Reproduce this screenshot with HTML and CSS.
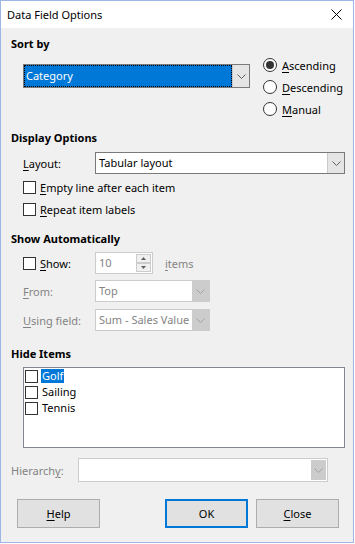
FILE: index.html
```html
<!DOCTYPE html>
<html lang="en">
<head>
    <meta charset="UTF-8">
    <title>Data Field Options</title>
    <link rel="stylesheet" href="styles.css">
</head>
<body>
<div class="window">
    <div class="titlebar">
        <span class="title">Data Field Options</span>
        <svg class="close" width="11" height="11" viewBox="0 0 11 11">
            <path d="M0.5 0.5 L10.5 10.5 M10.5 0.5 L0.5 10.5" stroke="#000" stroke-width="1" fill="none"/>
        </svg>
    </div>

    <div class="content">
        <div class="group-title">Sort by</div>
        <div class="sort-row">
            <div class="combo focus sort-combo">
                <span class="combo-value">Category</span>
                <span class="combo-btn"><svg width="9" height="5" viewBox="0 0 9 5"><path d="M0.5 0.5 L4.5 4.5 L8.5 0.5" stroke="#606060" fill="none"/></svg></span>
            </div>
            <div class="radios">
                <div class="radio-row"><span class="radio checked"></span><span><u>A</u>scending</span></div>
                <div class="radio-row"><span class="radio"></span><span><u>D</u>escending</span></div>
                <div class="radio-row"><span class="radio"></span><span><u>M</u>anual</span></div>
            </div>
        </div>

        <div class="group-title display-title">Display Options</div>
        <div class="field-row layout-row">
            <span class="field-label"><u>L</u>ayout:</span>
            <div class="combo layout-combo">
                <span class="combo-value">Tabular layout</span>
                <span class="combo-btn"><svg width="9" height="5" viewBox="0 0 9 5"><path d="M0.5 0.5 L4.5 4.5 L8.5 0.5" stroke="#606060" fill="none"/></svg></span>
            </div>
        </div>
        <div class="check-row first-check"><span class="checkbox"></span><span><u>E</u>mpty line after each item</span></div>
        <div class="check-row"><span class="checkbox"></span><span><u>R</u>epeat item labels</span></div>

        <div class="group-title show-title">Show Automatically</div>
        <div class="field-row show-row">
            <span class="field-label show-label"><span class="checkbox"></span><span><u>S</u>how:</span></span>
            <div class="spin">
                <span class="spin-value">10</span>
                <span class="spin-btns">
                    <span class="spin-btn"><svg width="5" height="3" viewBox="0 0 5 3"><path d="M0 3 L2.5 0 L5 3 Z" fill="#606060"/></svg></span>
                    <span class="spin-btn"><svg width="5" height="3" viewBox="0 0 5 3"><path d="M0 0 L2.5 3 L5 0 Z" fill="#606060"/></svg></span>
                </span>
            </div>
            <span class="items-label"><u>i</u>tems</span>
        </div>
        <div class="field-row from-row disabled">
            <span class="field-label"><u>F</u>rom:</span>
            <div class="combo small-combo">
                <span class="combo-value">Top</span>
                <span class="combo-btn"><svg width="9" height="5" viewBox="0 0 9 5"><path d="M0.5 0.5 L4.5 4.5 L8.5 0.5" stroke="#a0a0a0" fill="none"/></svg></span>
            </div>
        </div>
        <div class="field-row using-row disabled">
            <span class="field-label"><u>U</u>sing field:</span>
            <div class="combo small-combo">
                <span class="combo-value">Sum - Sales Value</span>
                <span class="combo-btn"><svg width="9" height="5" viewBox="0 0 9 5"><path d="M0.5 0.5 L4.5 4.5 L8.5 0.5" stroke="#a0a0a0" fill="none"/></svg></span>
            </div>
        </div>

        <div class="group-title hide-title">Hide Items</div>
        <div class="listbox">
            <div class="list-item"><span class="checkbox"></span><span class="item-text selected">Golf</span></div>
            <div class="list-item"><span class="checkbox"></span><span class="item-text">Sailing</span></div>
            <div class="list-item"><span class="checkbox"></span><span class="item-text">Tennis</span></div>
        </div>

        <div class="field-row hierarchy-row disabled">
            <span class="field-label hierarchy-label">Hierarch<u>y</u>:</span>
            <div class="combo hierarchy-combo">
                <span class="combo-value"></span>
                <span class="combo-btn"><svg width="9" height="5" viewBox="0 0 9 5"><path d="M0.5 0.5 L4.5 4.5 L8.5 0.5" stroke="#a0a0a0" fill="none"/></svg></span>
            </div>
        </div>

        <div class="buttons">
            <button class="btn"><u>H</u>elp</button>
            <span class="spacer"></span>
            <button class="btn default">OK</button>
            <button class="btn"><u>C</u>lose</button>
        </div>
    </div>
</div>
</body>
</html>
```

FILE: styles.css
```css
* {
    box-sizing: border-box;
}

body {
    margin: 0;
    background: #fff;
    font-family: "Noto Sans", "Open Sans", sans-serif;
    font-size: 11px;
    color: #000;
}

u {
    text-decoration-thickness: 1px;
    text-underline-offset: 2px;
}

.window {
    width: 354px;
    height: 543px;
    border: 1px solid #9db6e4;
    background: #f0f0f0;
    display: flex;
    flex-direction: column;
}

.titlebar {
    height: 27px;
    background: #fff;
    display: flex;
    align-items: center;
    justify-content: space-between;
    padding: 0 11px 0 6px;
}

.content {
    flex: 1;
    padding: 8px 0 0 10px;
}

.group-title {
    font-weight: bold;
    height: 16px;
    line-height: 16px;
}

/* sort by */
.sort-row {
    display: flex;
    margin-top: 2px;
    padding-left: 12px;
}

.combo {
    display: flex;
    height: 22px;
    border: 1px solid #7a7a7a;
    background: #fff;
}

.combo-value {
    flex: 1;
    padding-left: 3px;
    line-height: 20px;
    white-space: nowrap;
    overflow: hidden;
}

.combo-btn {
    width: 17px;
    background: #e5e5e5;
    border-left: 1px solid #c9c9c9;
    display: flex;
    align-items: center;
    justify-content: center;
}

.sort-combo {
    width: 227px;
    height: 24px;
    margin-top: 10px;
}

.sort-combo .combo-value {
    background: #0078d7;
    color: #fff;
    outline: 1px dotted #000;
    outline-offset: -1px;
    line-height: 22px;
    padding-left: 2px;
}

.radios {
    margin-left: 13px;
}

.radio-row {
    height: 22px;
    display: flex;
    align-items: center;
    gap: 5px;
}

.radio {
    width: 14px;
    height: 14px;
    border: 1px solid #333;
    border-radius: 50%;
    background: #fff;
    display: flex;
    align-items: center;
    justify-content: center;
}

.radio.checked::after {
    content: "";
    width: 8px;
    height: 8px;
    border-radius: 50%;
    background: #333;
}

/* display options */
.display-title {
    margin-top: 10px;
}

.field-row {
    display: flex;
    align-items: center;
    padding-left: 12px;
}

.field-label {
    width: 72px;
    flex-shrink: 0;
}

.layout-row {
    margin-top: 6px;
}

.layout-combo {
    width: 250px;
}

.checkbox {
    width: 13px;
    height: 13px;
    border: 1px solid #333;
    background: #fff;
    flex-shrink: 0;
}

.check-row {
    height: 22px;
    display: flex;
    align-items: center;
    gap: 4px;
    padding-left: 12px;
}

.first-check {
    margin-top: 2px;
}

/* show automatically */
.show-title {
    margin-top: 11px;
}

.show-row {
    margin-top: 5px;
}

.show-label {
    display: flex;
    align-items: center;
    gap: 4px;
}

.spin {
    width: 58px;
    height: 22px;
    border: 1px solid #ccc;
    background: #fff;
    display: flex;
}

.spin-value {
    flex: 1;
    padding-left: 3px;
    line-height: 20px;
    color: #838383;
}

.spin-btns {
    width: 16px;
    display: flex;
    flex-direction: column;
    padding: 1px 1px 1px 0;
}

.spin-btn {
    flex: 1;
    border: 1px solid #ccc;
    background: #f0f0f0;
    display: flex;
    align-items: center;
    justify-content: center;
}

.items-label {
    margin-left: 12px;
    color: #838383;
}

.disabled .field-label {
    color: #838383;
}

.disabled .combo {
    border-color: #ccc;
}

.disabled .combo-value {
    color: #838383;
}

.disabled .combo-btn {
    background: #ccc;
    border-left: none;
}

.small-combo {
    width: 115px;
}

.from-row {
    margin-top: 6px;
}

.using-row {
    margin-top: 7px;
}

/* hide items */
.hide-title {
    margin-top: 15px;
}

.listbox {
    margin: 5px 0 0 12px;
    width: 322px;
    height: 81px;
    border: 1px solid #828790;
    background: #fff;
    padding: 0 0 0 1px;
}

.list-item {
    height: 16px;
    display: flex;
    align-items: center;
    gap: 3px;
}

.item-text {
    line-height: 14px;
    padding: 0 1px;
}

.item-text.selected {
    background: #0078d7;
    color: #fff;
}

.hierarchy-row {
    margin-top: 10px;
    padding-left: 0;
}

.hierarchy-label {
    width: 67px;
}

.hierarchy-combo {
    width: 250px;
    height: 24px;
}

.hierarchy-combo .combo-btn {
    margin: 1px;
    width: 15px;
}

/* buttons */
.buttons {
    display: flex;
    margin-top: 17px;
    padding-left: 6px;
}

.btn {
    width: 83px;
    height: 29px;
    border: 1px solid #adadad;
    background: #e1e1e1;
    font-family: inherit;
    font-size: 11px;
    color: #000;
    padding: 0;
}

.btn.default {
    border: 2px solid #0078d7;
    margin-right: 8px;
}

.spacer {
    width: 65px;
}
```
